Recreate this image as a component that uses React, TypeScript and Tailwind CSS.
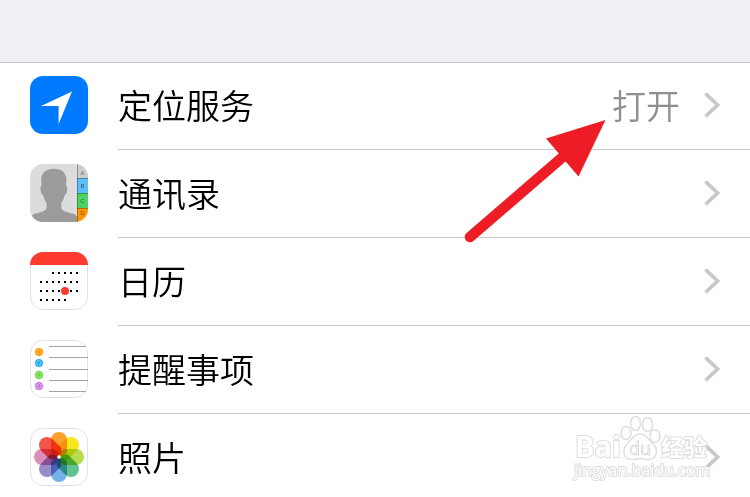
import React from "react";

const LocationIcon = () => (
  <svg className="size-[58px]" viewBox="0 0 58 58" aria-hidden="true">
    <rect width="58" height="58" rx="13" fill="#007aff" />
    <path d="M42 15.5 28.6 48V30H11Z" fill="#fff" />
  </svg>
);

const ContactsIcon = () => (
  <svg className="size-[58px]" viewBox="0 0 58 58" aria-hidden="true">
    <defs>
      <clipPath id="contacts">
        <rect width="58" height="58" rx="13" />
      </clipPath>
    </defs>
    <g clipPath="url(#contacts)">
      <rect width="58" height="58" fill="#dcdcdc" />
      <path
        d="M24 4.8C16 4.8 10.8 9 11.2 16.5L11.6 22C10.2 22 10.2 24.5 10.8 27C11.2 29.5 12 31 13.2 31.2C13.8 34.5 15 37 16.6 39V44C15.8 47 10.5 48.3 6 49.6C3 50.4 0 52 0 58H48C48 52 45.5 50.4 42 49.6C37.5 48.3 32 47 31.2 44V39C32.8 37 34 34.5 34.6 31.2C35.8 31 36.5 29.5 37 27C37.4 24.5 37.4 22 36 22L36.4 16.5C36.6 9 32 4.8 24 4.8Z"
        fill="#9b9b9b"
      />
      <rect x="47" width="11" height="14" fill="#cfcdca" />
      <rect x="47" y="14" width="11" height="15" fill="#5ac0fa" />
      <rect x="47" y="29" width="11" height="15" fill="#4cd463" />
      <rect x="47" y="44" width="11" height="14" fill="#ff9500" />
      <path d="M47 14.5H58M47 29.5H58M47 44.5H58M47.5 0V58" stroke="#000" strokeOpacity=".3" />
      <g
        className="font-['Liberation_Sans']"
        fontSize="6"
        textAnchor="middle"
        fill="#000"
        fillOpacity=".55"
      >
        <text x="52.5" y="11">A</text>
        <text x="52.5" y="24">B</text>
        <text x="52.5" y="39">C</text>
        <text x="52.5" y="51">D</text>
      </g>
    </g>
  </svg>
);

const calendarDots = [
  { y: 20, from: 2, to: 6 },
  { y: 29, from: 0, to: 6 },
  { y: 38, from: 0, to: 6 },
  { y: 47, from: 0, to: 4 },
];

const CalendarIcon = () => (
  <svg className="size-[58px]" viewBox="0 0 58 58" aria-hidden="true">
    <defs>
      <clipPath id="calendar">
        <rect width="58" height="58" rx="13" />
      </clipPath>
    </defs>
    <rect x=".5" y=".5" width="57" height="57" rx="12.5" fill="#fff" stroke="#e2e2e2" />
    <rect width="58" height="13" fill="#ff3b30" clipPath="url(#calendar)" />
    {calendarDots.map((row) =>
      Array.from({ length: row.to - row.from + 1 }, (_, i) => (
        <rect
          key={`${row.y}-${i}`}
          x={10 + (row.from + i) * 6}
          y={row.y}
          width="2"
          height="2"
        />
      ))
    )}
    <circle cx="35" cy="39" r="4" fill="#ff3b30" />
  </svg>
);

const reminderDots = [
  { y: 12, color: "#ff9500" },
  { y: 23, color: "#1badf8" },
  { y: 35, color: "#63da38" },
  { y: 46, color: "#cc73e1" },
];

const RemindersIcon = () => (
  <svg className="size-[58px]" viewBox="0 0 58 58" aria-hidden="true">
    <rect x=".5" y=".5" width="57" height="57" rx="12.5" fill="#fff" stroke="#e2e2e2" />
    <path
      d="M19 6.5H56M19 17.5H58M19 29.5H58M19 40.5H58M19 51.5H56"
      stroke="#a3a3a3"
    />
    {reminderDots.map((dot) => (
      <g key={dot.y}>
        <circle cx="9" cy={dot.y} r="4" fill={dot.color} />
        <circle cx="9" cy={dot.y} r="2.4" fill="none" stroke="#fff" strokeOpacity=".5" strokeWidth=".8" />
      </g>
    ))}
  </svg>
);

const petals = [
  "#fca02c",
  "#f8e71c",
  "#b8dc50",
  "#62c391",
  "#74b3e8",
  "#9c8bcb",
  "#dc8ebb",
  "#f5544a",
];

const PhotosIcon = () => (
  <svg className="size-[58px]" viewBox="0 0 58 58" aria-hidden="true">
    <rect x=".5" y=".5" width="57" height="57" rx="12.5" fill="#fff" stroke="#e2e2e2" />
    {petals.map((color, i) => (
      <path
        key={color}
        className="mix-blend-multiply"
        d="M21 12A8 8 0 0 1 37 12V23C37 26 33 28 29 28.5C25 28 21 26 21 23Z"
        fill={color}
        transform={`rotate(${i * 45} 29 29)`}
      />
    ))}
    <circle cx="29" cy="29" r="1.8" fill="#fff" />
  </svg>
);

const Chevron = () => (
  <svg className="h-7 w-4 shrink-0" viewBox="0 0 16 28" fill="none" aria-hidden="true">
    <path d="M1.5 2.5 13.5 14 1.5 25.5" stroke="#c7c7cc" strokeWidth="3.8" />
  </svg>
);

const Arrow = () => (
  <svg
    className="pointer-events-none absolute top-[118px] right-[144px] h-[126px] w-[142px]"
    viewBox="464 118 142 126"
    aria-hidden="true"
  >
    <path d="M470 237 565 155" stroke="#ee1c25" strokeWidth="10.5" strokeLinecap="round" />
    <path d="M605.5 120 546 138.5 578.5 176.5Z" fill="#ee1c25" />
  </svg>
);

const Watermark = () => (
  <svg
    className="pointer-events-none absolute top-[412px] right-[36px] h-[72px] w-[142px]"
    viewBox="572 412 142 72"
    fill="#fff"
    fillOpacity=".7"
    stroke="#dedede"
    strokeWidth="1.5"
    aria-hidden="true"
  >
    <ellipse cx="626" cy="433" rx="5" ry="6.5" />
    <ellipse cx="635.5" cy="423.5" rx="5" ry="7" />
    <ellipse cx="647.5" cy="424.5" rx="5" ry="7" />
    <ellipse cx="655" cy="436" rx="5" ry="6.5" />
    <path d="M640 434C647 434 649 441 653 444C659 449 657 459 649 459.5C645 459.5 643 458.5 640 458.5C637 458.5 635 459.5 631 459.5C623 459 622 449 627 444C631 441 633 434 640 434Z" />
    <g className="font-['Open_Sans','Noto_Sans_CJK_SC',sans-serif]" strokeLinejoin="round">
      <g fontWeight="700" strokeWidth="2" paintOrder="stroke" fillOpacity="1">
        <text x="575" y="457" fontSize="29">Bai</text>
        <text x="661" y="456" fontSize="23">经验</text>
      </g>
      <text x="629" y="455" fontSize="18" fontWeight="400" strokeWidth="1">du</text>
      <text x="574" y="476" fontSize="16" fontWeight="400" strokeWidth="2" paintOrder="stroke" fillOpacity="1">
        jingyan.baidu.com
      </text>
    </g>
  </svg>
);

interface Setting {
  label: string;
  icon: React.ReactNode;
  value?: string;
}

const settings: Setting[] = [
  { label: "定位服务", icon: <LocationIcon />, value: "打开" },
  { label: "通讯录", icon: <ContactsIcon /> },
  { label: "日历", icon: <CalendarIcon /> },
  { label: "提醒事项", icon: <RemindersIcon /> },
  { label: "照片", icon: <PhotosIcon /> },
];

const SettingRow = ({ label, icon, value }: Setting) => (
  <li>
    <a href="#" className="flex h-22 items-center gap-[30px] pl-[30px]">
      <span className="shrink-0 pb-0.5">{icon}</span>
      <span className="flex grow items-center gap-6 self-stretch border-b border-[#c8c7cc] pr-[30px] pb-0.5">
        <span className="grow text-black">{label}</span>
        {value && <span className="text-[#8e8e93]">{value}</span>}
        <Chevron />
      </span>
    </a>
  </li>
);

const App = () => {
  return (
    <main className="relative h-screen overflow-hidden bg-white font-['Noto_Sans_CJK_SC',sans-serif] text-[34px] leading-10 font-[350]">
      <header className="-mb-px h-[63px] border-b border-[#c8c7cc] bg-[#efeff4]" />
      <ul>
        {settings.map((setting) => (
          <SettingRow key={setting.label} {...setting} />
        ))}
      </ul>
      <Arrow />
      <Watermark />
    </main>
  );
};
export default App;
